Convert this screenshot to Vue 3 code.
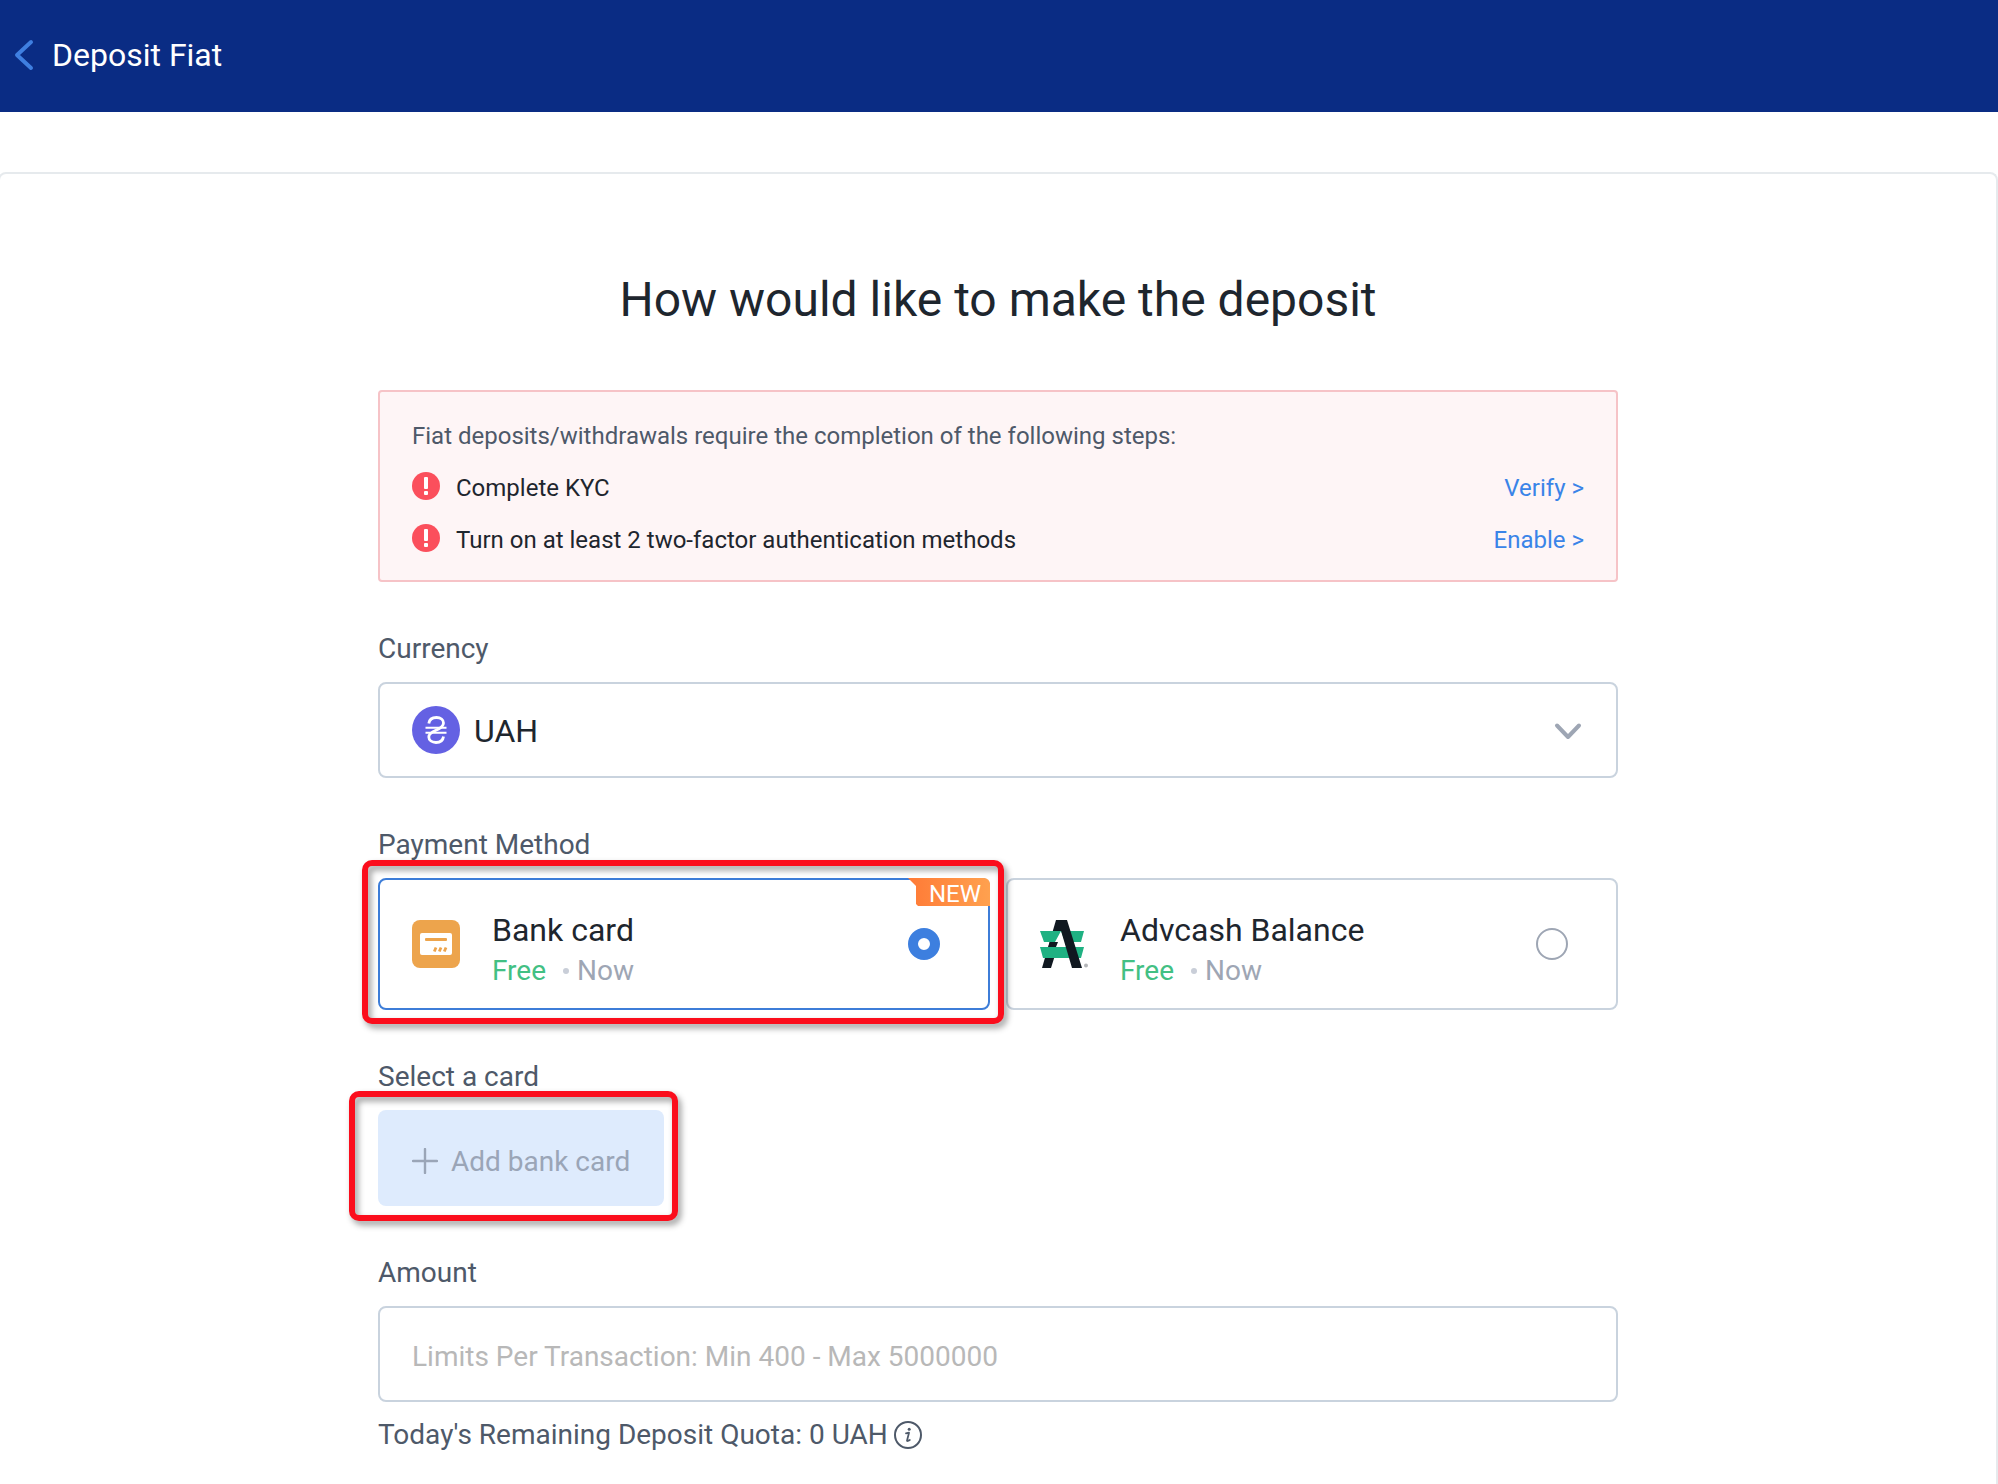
<script setup>
import { ref } from 'vue'

const currency = ref('UAH')
const currencies = ['UAH']
const amount = ref('')
const quota = ref(0)

const steps = [
  { id: 1, title: 'Complete KYC', action: 'Verify >' },
  { id: 2, title: 'Turn on at least 2 two-factor authentication methods', action: 'Enable >' }
]

const methods = [
  { id: 'card', title: 'Bank card', fee: 'Free', time: 'Now', isNew: true },
  { id: 'advcash', title: 'Advcash Balance', fee: 'Free', time: 'Now', isNew: false }
]
const method = ref('card')
</script>

<template>
  <div class="page">
    <header class="header">
      <button class="back" type="button" aria-label="Back">
        <svg width="20" height="32" viewBox="0 0 20 32" fill="none">
          <path d="M17 3 L3 16 L17 29" stroke="#3f7fe0" stroke-width="4" stroke-linecap="round" stroke-linejoin="round" />
        </svg>
      </button>
      <span class="header-title">Deposit Fiat</span>
    </header>

    <main class="panel">
      <div class="content">
        <h1>How would like to make the deposit</h1>

        <section class="alert">
          <p class="alert-text">Fiat deposits/withdrawals require the completion of the following steps:</p>
          <div v-for="step in steps" :key="step.id" class="step">
            <svg width="28" height="28" viewBox="0 0 28 28">
              <circle cx="14" cy="14" r="14" fill="#fb4f5c" />
              <rect x="12" y="5" width="4" height="12" rx="1" fill="#fff" />
              <rect x="12" y="19" width="4" height="4" rx="1" fill="#fff" />
            </svg>
            <span class="step-title">{{ step.title }}</span>
            <a href="#">{{ step.action }}</a>
          </div>
        </section>

        <section class="field">
          <label class="label" for="currency">Currency</label>
          <div class="box currency">
            <svg width="48" height="48" viewBox="0 0 48 48" fill="none">
              <circle cx="24" cy="24" r="24" fill="#6461e3" />
              <path
                d="M16.8 17.5C17.3 13.5 20.5 11.5 24.5 11.5C28.7 11.5 31.5 13.8 31.5 17C31.5 20.5 28 22.5 24 24.3C20 26 16.8 27.8 16.8 31C16.8 34.3 20 36.5 24 36.5C28 36.5 31 34.5 31.5 30.5"
                stroke="#fff" stroke-width="2.8"
              />
              <path d="M13.5 21.8H34.5M13.5 26.8H34.5" stroke="#fff" stroke-width="2" />
            </svg>
            <select id="currency" v-model="currency">
              <option v-for="c in currencies" :key="c" :value="c">{{ c }}</option>
            </select>
            <svg class="arrow" width="28" height="20" viewBox="0 0 28 20" fill="none">
              <path d="M3 5.5 L14 17 L25 5.5" stroke="#9ea6b4" stroke-width="4" stroke-linecap="round" stroke-linejoin="round" />
            </svg>
          </div>
        </section>

        <section class="field">
          <span id="method-label" class="label">Payment Method</span>
          <div class="methods" role="radiogroup" aria-labelledby="method-label">
            <label v-for="m in methods" :key="m.id" class="method" :class="{ active: method === m.id }">
              <svg v-if="m.id === 'card'" width="48" height="48" viewBox="0 0 48 48">
                <rect width="48" height="48" rx="8" fill="#eda44c" />
                <rect x="8" y="13" width="32" height="22" rx="2" fill="#fff" />
                <rect x="13" y="18" width="22" height="3" rx="1" fill="#eda44c" />
                <path d="M22.3 31.5L24 27.5M27.3 31.5L29 27.5M32.3 31.5L34 27.5" stroke="#eda44c" stroke-width="2.8" />
              </svg>
              <svg v-else width="48" height="48" viewBox="0 0 48 48">
                <path d="M16 0H26L11 48H2Z" fill="#101820" />
                <path d="M0 11H44L41 22H4Z" fill="#1fb182" />
                <path d="M21 11L27 27H12.5L17 22H15Z" fill="#fff" />
                <path d="M9.8 22H18L16 27H8.3Z" fill="#101820" />
                <path d="M0 27H44L41 38H3Z" fill="#1fb182" />
                <path d="M16 0H27L42 48H32L20.5 9Z" fill="#101820" />
                <circle cx="46" cy="45.5" r="2" fill="#b3b5b8" />
              </svg>
              <span class="method-info">
                <span class="method-title">{{ m.title }}</span>
                <span class="method-sub">
                  <span class="fee">{{ m.fee }}</span>
                  <i class="dot"></i>
                  <span>{{ m.time }}</span>
                </span>
              </span>
              <input type="radio" name="method" :value="m.id" v-model="method">
              <span v-if="m.isNew" class="badge">NEW</span>
              <i v-if="m.isNew" class="mark mark-method"></i>
            </label>
          </div>
        </section>

        <section class="field">
          <span class="label">Select a card</span>
          <div class="add-wrap">
            <button class="add" type="button" disabled>
              <svg width="26" height="26" viewBox="0 0 26 26" fill="none">
                <path d="M13 1V25M1 13H25" stroke="#9aa5b7" stroke-width="2.4" stroke-linecap="round" />
              </svg>
              <span>Add bank card</span>
            </button>
            <i class="mark mark-add"></i>
          </div>
        </section>

        <section class="field">
          <label class="label" for="amount">Amount</label>
          <input
            id="amount"
            v-model="amount"
            class="box amount"
            type="text"
            placeholder="Limits Per Transaction: Min 400 - Max 5000000"
          >
          <p class="quota">
            <span>Today's Remaining Deposit Quota: {{ quota }} {{ currency }}</span>
            <svg width="28" height="28" viewBox="0 0 28 28" fill="none" stroke="#4e5969">
              <circle cx="14" cy="14" r="13" stroke-width="2" />
              <circle cx="15.2" cy="8.2" r="1.5" fill="#4e5969" stroke="none" />
              <path d="M12 12.3L15 11.7L13 19.6Q13 20.6 15.8 19" stroke-width="1.8" stroke-linecap="round" stroke-linejoin="round" />
            </svg>
          </p>
        </section>
      </div>
    </main>
  </div>
</template>

<style>
body {
  margin: 0;
  background: #fff;
}
</style>

<style scoped>
.page {
  display: flex;
  flex-direction: column;
  min-height: 100vh;
  overflow-x: hidden;
  font-family: Roboto, "Liberation Sans", sans-serif;
  color: #1e262e;
}

.page * {
  box-sizing: border-box;
}

button,
input,
select {
  font-family: inherit;
}

.header {
  display: flex;
  align-items: center;
  gap: 18px;
  height: 112px;
  padding: 0 16px 2px 14px;
  background: #0a2c84;
  color: #fff;
}

.back {
  display: flex;
  padding: 0;
  border: 0;
  background: none;
  cursor: pointer;
}

.header-title {
  font-size: 32px;
  line-height: 40px;
}

.panel {
  flex: 1;
  margin: 60px 0 0 -2px;
  padding: 98px 24px 24px;
  border: 2px solid #e6eaed;
  border-bottom: 0;
  border-radius: 8px 8px 0 0;
}

.content {
  max-width: 1240px;
  margin: 0 auto;
}

h1 {
  margin: 0 0 62px;
  font-size: 48px;
  font-weight: 400;
  line-height: 56px;
  text-align: center;
}

.alert {
  display: flex;
  flex-direction: column;
  gap: 20px;
  padding: 28px 32px 24px;
  border: 2px solid #f6c3c7;
  border-radius: 4px;
  background: #fef5f6;
  font-size: 24px;
  line-height: 32px;
}

.alert-text {
  margin: 0;
  color: #4e5969;
}

.step {
  display: flex;
  align-items: flex-start;
  gap: 16px;
}

.step-title {
  flex: 1;
}

.step a {
  color: #3a84e8;
  text-decoration: none;
}

.field {
  display: flex;
  flex-direction: column;
  gap: 14px;
  margin-top: 48px;
}

.label {
  font-size: 28px;
  line-height: 38px;
  color: #4e5969;
}

.box {
  height: 96px;
  padding: 0 32px;
  border: 2px solid #c9d3de;
  border-radius: 8px;
  background: #fff;
}

.currency {
  display: flex;
  align-items: center;
  gap: 14px;
  padding-right: 34px;
}

.currency select {
  flex: 1;
  height: 92px;
  padding: 2px 0 0;
  border: 0;
  outline: 0;
  appearance: none;
  background: none;
  font-size: 32px;
  color: #1e262e;
}

.arrow {
  pointer-events: none;
}

.methods {
  display: grid;
  grid-template-columns: 1fr 1fr;
  gap: 16px;
}

.method {
  position: relative;
  display: flex;
  align-items: center;
  gap: 32px;
  height: 132px;
  padding: 0 48px 0 32px;
  border: 2px solid #c9d3de;
  border-radius: 8px;
  cursor: pointer;
}

.method.active {
  z-index: 1;
  border-color: #3d7dd8;
}

.method-info {
  display: flex;
  flex: 1;
  flex-direction: column;
  padding-top: 14px;
}

.method-title {
  font-size: 32px;
  line-height: 40px;
}

.method-sub {
  display: flex;
  align-items: center;
  font-size: 28px;
  line-height: 42px;
  color: #9ea6b4;
}

.fee {
  color: #42c083;
}

.dot {
  width: 6px;
  height: 6px;
  margin: 0 8px 0 17px;
  border-radius: 50%;
  background: #c9ced8;
}

.method input {
  width: 32px;
  height: 32px;
  margin: 0;
  border: 2px solid #9ea6b4;
  border-radius: 50%;
  appearance: none;
  background: #fff;
}

.method input:checked {
  border: 10px solid #3d7fdf;
}

.badge {
  position: absolute;
  top: -2px;
  right: -2px;
  width: 82px;
  height: 28px;
  padding-left: 21px;
  border-radius: 0 6px 0 0;
  background: linear-gradient(90deg, #ff7a36, #ffa14f);
  clip-path: polygon(0 0, 100% 0, 100% 100%, 10px 100%, 8px 26px, 8px 8px);
  font-size: 24px;
  line-height: 32px;
  color: #fff;
}

.mark {
  position: absolute;
  z-index: 2;
  border: 6px solid #fb0d1c;
  border-radius: 10px;
  filter: drop-shadow(3px 4px 3px rgba(0, 0, 0, 0.4));
  pointer-events: none;
}

.mark-method {
  inset: -20px -16px -16px -18px;
}

.mark-add {
  inset: -19px -14px -15px -29px;
}

.add-wrap {
  position: relative;
  align-self: flex-start;
}

.add {
  display: flex;
  align-items: center;
  gap: 13px;
  height: 96px;
  padding: 6px 34px 0;
  border: 0;
  border-radius: 8px;
  background: #deebfd;
  font-size: 28px;
  color: #9aa5b7;
}

.amount {
  width: 100%;
  padding-top: 4px;
  outline: 0;
  font-size: 28px;
  color: #1e262e;
}

.amount::placeholder {
  color: #b8b8b8;
  opacity: 1;
}

.quota {
  display: flex;
  align-items: center;
  gap: 6px;
  margin: 0;
  font-size: 28px;
  line-height: 38px;
  color: #4e5969;
}
</style>
